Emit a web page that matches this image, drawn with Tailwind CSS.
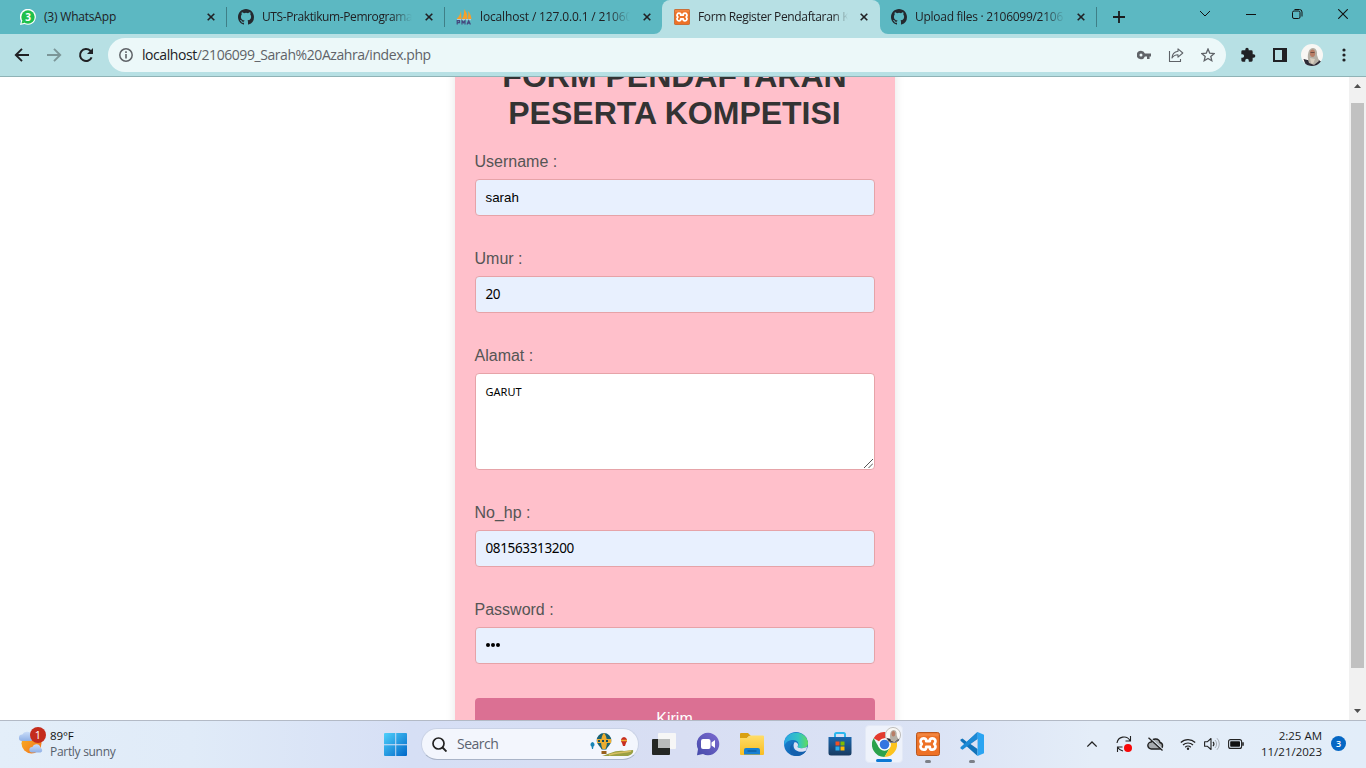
<!DOCTYPE html>
<html lang="id">
<head>
<meta charset="utf-8">
<title>Form Register Pendaftaran Kompetisi</title>
<script src="https://cdn.jsdelivr.net/npm/@tailwindcss/browser@4"></script>
</head>
<body class="w-[1366px] h-[768px] overflow-hidden flex flex-col bg-white font-['Open_Sans','Noto_Sans',sans-serif] text-[12px] text-[#202124]">
<svg class="hidden">
  <symbol id="gh" viewBox="0 0 16 16"><path fill="#24292f" d="M8 0C3.58 0 0 3.58 0 8c0 3.54 2.29 6.53 5.47 7.59.4.07.55-.17.55-.38 0-.19-.01-.82-.01-1.49-2.01.37-2.53-.49-2.69-.94-.09-.23-.48-.94-.82-1.13-.28-.15-.68-.52-.01-.53.63-.01 1.08.58 1.23.82.72 1.21 1.87.87 2.33.66.07-.52.28-.87.51-1.07-1.78-.2-3.64-.89-3.64-3.95 0-.87.31-1.59.82-2.15-.08-.2-.36-1.02.08-2.12 0 0 .67-.21 2.2.82a7.6 7.6 0 0 1 4 0c1.53-1.04 2.2-.82 2.2-.82.44 1.1.16 1.92.08 2.12.51.56.82 1.27.82 2.15 0 3.07-1.87 3.75-3.65 3.95.29.25.54.73.54 1.48 0 1.07-.01 1.93-.01 2.2 0 .21.15.46.55.38A8.01 8.01 0 0 0 16 8c0-4.42-3.58-8-8-8z"/></symbol>
  <symbol id="xampp" viewBox="0 0 24 24"><rect x=".5" y=".5" width="23" height="23" rx="2" fill="#ee7126" stroke="#b9571f"/><path d="M1.500 1.500h21v3c-8-1-15-1-21 .5z" fill="#f59a58" opacity=".5"/><path d="M7.500 6.300a3 3 0 0 0-2.700 4.300L5.800 12l-1 1.400a3 3 0 0 0 2.700 4.300c1.700 0 2.700-.9 2.700-2.300v-.6h3.600v.6c0 1.400 1 2.300 2.700 2.300a3 3 0 0 0 2.700-4.300L18.200 12l1-1.400a3 3 0 0 0-2.700-4.300c-1.700 0-2.700.9-2.700 2.300v.6h-3.600v-.6c0-1.400-1-2.300-2.700-2.300z" fill="none" stroke="#fff" stroke-width="2.700" stroke-linejoin="round"/></symbol>
  <symbol id="x" viewBox="0 0 8 8"><path d="M.7.7l6.600 6.600M7.300.7L.7 7.300" stroke="#202124" stroke-width="1.600"/></symbol>
</svg>

<!-- Tab strip -->
<div class="h-[34px] shrink-0 bg-[#5cb8c2] flex items-stretch pl-[8px]">
  <div class="w-[218px] flex items-center pl-[12px] pr-[10px]">
    <div class="w-4 h-4 shrink-0 relative"><svg class="w-4 h-4" viewBox="0 0 16 16"><path d="M0 16l1.100-4A8 8 0 1 1 4.500 15z" fill="#fff"/><circle cx="8" cy="8" r="6.700" fill="#1fc04b"/><path d="M1.500 14.500l.8-3 2.500 2.300z" fill="#1fc04b"/></svg><span class="absolute inset-0 text-center text-[10px] leading-[16px] font-bold text-white">3</span></div>
    <span class="ml-2 w-[150px] whitespace-nowrap overflow-hidden leading-4 tracking-[-0.2px]">(3) WhatsApp</span>
    <svg class="w-2 h-2 ml-[13px] shrink-0"><use href="#x"/></svg>
    <div class="w-px h-5 bg-[#3f7f87] ml-auto -mr-[11px] shrink-0"></div>
  </div>
  <div class="w-[218px] flex items-center pl-[12px] pr-[10px]">
    <svg class="w-4 h-4 shrink-0"><use href="#gh"/></svg>
    <span class="ml-2 w-[150px] whitespace-nowrap overflow-hidden leading-4 tracking-[-0.4px] [mask-image:linear-gradient(90deg,#000_86%,transparent)]">UTS-Praktikum-Pemrograma</span>
    <svg class="w-2 h-2 ml-[13px] shrink-0"><use href="#x"/></svg>
    <div class="w-px h-5 bg-[#3f7f87] ml-auto -mr-[11px] shrink-0"></div>
  </div>
  <div class="w-[218px] flex items-center pl-[12px] pr-[11px]">
    <svg class="w-4 h-4 shrink-0" viewBox="0 0 16 16"><path d="M.5 10C3 8 4.500 5 5 1.500L5.500 10zM6 10C8 7 8.500 3 8 0c3 3 4 7 3 10zM11.500 10c1-3 1-5.500.5-8 2 2 3 4.500 3.500 8z" fill="#f5a02c"/><path d="M1 10.700h14" stroke="#d9dce8" stroke-width=".8"/><path d="M1.200 15.500v-3.800h2.300v2H1.200M6 15.500v-3.800l1.500 2 1.500-2v3.800M11 15.500l1.700-3.800 1.700 3.800M11.500 14.200h2.500" stroke="#45487e" stroke-width="1.200" fill="none"/></svg>
    <span class="ml-2 w-[150px] whitespace-nowrap overflow-hidden leading-4 tracking-[-0.15px] [mask-image:linear-gradient(90deg,#000_86%,transparent)]">localhost / 127.0.0.1 / 21060</span>
    <svg class="w-2 h-2 ml-[13px] shrink-0"><use href="#x"/></svg>
  </div>
  <div class="w-[218px] flex items-center pl-[12px] pr-[11px] bg-[#b7e0e4] rounded-t-[8px] relative">
    <svg class="absolute -left-2 bottom-0 w-2 h-2" viewBox="0 0 8 8"><path d="M8 0v8H0a8 8 0 0 0 8-8z" fill="#b7e0e4"/></svg>
    <svg class="absolute -right-2 bottom-0 w-2 h-2" viewBox="0 0 8 8"><path d="M0 0v8h8a8 8 0 0 1-8-8z" fill="#b7e0e4"/></svg>
    <svg class="w-4 h-4 shrink-0"><use href="#xampp"/></svg>
    <span class="ml-2 w-[150px] whitespace-nowrap overflow-hidden leading-4 tracking-[-0.35px] [mask-image:linear-gradient(90deg,#000_90%,transparent)]">Form Register Pendaftaran K</span>
    <svg class="w-2 h-2 ml-[12px] shrink-0"><use href="#x"/></svg>
  </div>
  <div class="w-[217px] flex items-center pl-[11px] pr-[11px]">
    <svg class="w-4 h-4 shrink-0"><use href="#gh"/></svg>
    <span class="ml-2 w-[150px] whitespace-nowrap overflow-hidden leading-4 tracking-[-0.27px] [mask-image:linear-gradient(90deg,#000_86%,transparent)]">Upload files · 2106099/2106</span>
    <svg class="w-2 h-2 ml-[12px] shrink-0"><use href="#x"/></svg>
    <div class="w-px h-5 bg-[#3f7f87] ml-auto -mr-[11px] shrink-0"></div>
  </div>
  <svg class="w-3 h-3 ml-[16px] self-center" viewBox="0 0 12 12"><path d="M6 0v12M0 6h12" stroke="#1b1c1e" stroke-width="1.800"/></svg>
  <div class="ml-auto flex items-start pt-[9px] pr-[18px] gap-[36px]">
    <svg class="w-[10px] h-[10px]" viewBox="0 0 10 10"><path d="M0 2l5 5 5-5" fill="none" stroke="#111" stroke-width="1"/></svg>
    <svg class="w-[10px] h-[10px]" viewBox="0 0 10 10"><path d="M0 5.500h10" stroke="#111" stroke-width="1"/></svg>
    <svg class="w-[10px] h-[10px] overflow-visible" viewBox="0 0 10 10"><rect x=".5" y="2" width="7.500" height="7.500" rx="1.500" fill="none" stroke="#111"/><path d="M2.500.5h5A2.500 2.500 0 0 1 10 3v4.500" fill="none" stroke="#111"/></svg>
    <svg class="w-[10px] h-[10px]" viewBox="0 0 10 10"><path d="M.2.200l9.600 9.600M9.800.200L.2 9.800" stroke="#111" stroke-width="1.100"/></svg>
  </div>
</div>

<!-- Toolbar -->
<div class="h-[43px] shrink-0 bg-[#b7e0e4] border-b border-[#8fb3b6] flex items-center pl-[14px] pr-[14px]">
  <svg class="w-4 h-4" viewBox="0 0 16 16"><path d="M15 8H2M8 1.800L1.800 8 8 14.200" fill="none" stroke="#202124" stroke-width="1.900"/></svg>
  <svg class="w-4 h-4 ml-4" viewBox="0 0 16 16"><path d="M1 8h13M8 1.800L14.200 8 8 14.200" fill="none" stroke="#7b9698" stroke-width="1.900"/></svg>
  <svg class="w-4 h-4 ml-4" viewBox="0 0 16 16"><path d="M13.600 10.300A6 6 0 1 1 12.300 3.800L14 5.500" fill="none" stroke="#202124" stroke-width="2"/><path d="M15 1v6H9z" fill="#202124"/></svg>
  <div class="ml-[14px] w-[1118px] h-[34px] rounded-full bg-[#ecf8f9] flex items-center pl-[11px] pr-[11px]">
    <svg class="w-[14px] h-[14px]" viewBox="0 0 14 14"><circle cx="7" cy="7" r="6.200" fill="none" stroke="#5f6368" stroke-width="1.500"/><path d="M7 6v4.500M7 3.300v1.600" stroke="#5f6368" stroke-width="1.600"/></svg>
    <span class="ml-[9px] text-[14px] leading-5 text-[#5f6368] whitespace-nowrap tracking-[-0.43px]"><span class="text-[#202124]">localhost</span>/2106099_Sarah%20Azahra/index.php</span>
    <svg class="w-[14px] h-[10px] ml-auto" viewBox="0 0 14 10"><path fill-rule="evenodd" d="M4 .8a4.200 4.200 0 1 0 3.900 5.700H10V9h2.600V6.500H14v-3H7.900A4.200 4.200 0 0 0 4 .8zm0 2.700a1.500 1.500 0 1 1 0 3 1.500 1.500 0 0 1 0-3z" fill="#5f6368"/></svg>
    <svg class="w-4 h-4 ml-[17px]" viewBox="0 0 16 16"><path d="M1.500 4v10.500h11V12M10 1.800L14.800 6 10 10.200V7.700C7 7.700 5.300 8.700 4 11c.2-3.600 2.300-6.200 6-6.700z" fill="none" stroke="#5f6368" stroke-width="1.100" stroke-linejoin="round"/></svg>
    <svg class="w-[14px] h-[14px] ml-[17px]" viewBox="0 0 14 14"><path d="M7 1l1.700 4.100 4.500.4-3.400 2.900 1 4.300L7 10.400l-3.800 2.300 1-4.300L.8 5.500l4.500-.4z" fill="none" stroke="#5f6368" stroke-width="1.300"/></svg>
  </div>
  <svg class="w-4 h-4 ml-[14px]" viewBox="0 0 24 24"><path d="M20.500 11H19V7a2 2 0 0 0-2-2h-4V3.500a2.500 2.500 0 0 0-5 0V5H4a2 2 0 0 0-2 2v3.800h1.500a2.700 2.700 0 0 1 0 5.400H2V20a2 2 0 0 0 2 2h3.800v-1.500a2.700 2.700 0 0 1 5.400 0V22H17a2 2 0 0 0 2-2v-4h1.500a2.500 2.500 0 0 0 0-5z" fill="#202124"/></svg>
  <svg class="w-[14px] h-[14px] ml-[17px]" viewBox="0 0 14 14"><path d="M1 1h12v12H1z" fill="none" stroke="#202124" stroke-width="2"/><path d="M9 0h5v14H9z" fill="#202124"/></svg>
  <svg class="w-[22px] h-[22px] ml-[14px]" viewBox="0 0 22 22"><defs><clipPath id="av"><circle cx="11" cy="11" r="11"/></clipPath></defs><g clip-path="url(#av)"><path fill="#f8f7f4" d="M0 0h22v22H0z"/><path d="M2.500 15l6 1.500L13 20l4-4.500 3 2V22H5z" fill="#2c2b36"/><path d="M8 19C6.500 15 6.500 11 7.500 8c1-3 2.500-4 4.500-4 3.500 0 4.500 4 4 7l2 6-5 4z" fill="#b5b0a5"/><ellipse cx="11.500" cy="9.300" rx="2.600" ry="3.800" fill="#b87d65"/><path d="M9.500 8.500h4" stroke="#5b4038" stroke-width=".8"/><path d="M9 14l5 1-2 5-2-1z" fill="#d8cfc0"/></g></svg>
  <svg class="w-[4px] h-[14px] ml-[19px]" viewBox="0 0 4 14"><g fill="#202124"><circle cx="2" cy="2" r="1.600"/><circle cx="2" cy="7" r="1.600"/><circle cx="2" cy="12" r="1.600"/></g></svg>
</div>

<!-- Page -->
<div class="h-[643px] shrink-0 flex overflow-hidden bg-white">
  <div class="flex-1 overflow-hidden flex justify-center items-start font-['Liberation_Sans',Arial,sans-serif]">
    <div class="w-[440px] h-[760px] -mt-[39px] px-5 pt-5 bg-[#ffc0cb] shadow-[0_0_10px_rgba(0,0,0,0.1)] text-[16px] leading-[18px] text-[#555]">
      <h1 class="text-[32px] leading-[37px] font-bold text-center text-[#333] mb-[21px]">FORM PENDAFTARAN PESERTA KOMPETISI</h1>
      <div class="mb-[33px]"><label class="block mb-[8px]">Username :</label><div class="h-[37px] rounded-[4px] border border-[#e6a3a8] bg-[#e8f0fe] px-[10px] flex items-center text-[13.33px] text-black">sarah</div></div>
      <div class="mb-[33px] mt-[34px]"><label class="block mb-[8px]">Umur :</label><div class="h-[37px] rounded-[4px] border border-[#e6a3a8] bg-[#e8f0fe] px-[10px] pb-px flex items-center text-[13.5px] tracking-[-0.35px] text-black font-['Noto_Sans',sans-serif]">20</div></div>
      <div class="mb-[33px] mt-[34px]"><label class="block mb-[8px]">Alamat :</label><div class="h-[97px] rounded-[4px] border border-[#e6a3a8] bg-white px-[10px] pt-[9px] relative text-[11px] text-black font-['Noto_Sans',sans-serif]">GARUT<svg class="absolute right-px bottom-px w-[9px] h-[9px]" viewBox="0 0 9 9"><path d="M0 9l9-9M4.500 9L9 4.500" stroke="#555" stroke-width="1"/></svg></div></div>
      <div class="mb-[33px] mt-[34px]"><label class="block mb-[8px]">No_hp :</label><div class="h-[37px] rounded-[4px] border border-[#e6a3a8] bg-[#e8f0fe] px-[10px] pb-px flex items-center text-[13.5px] tracking-[-0.35px] text-black font-['Noto_Sans',sans-serif]">081563313200</div></div>
      <div class="mb-[34px] mt-[34px]"><label class="block mb-[8px]">Password :</label><div class="h-[37px] rounded-[4px] border border-[#e6a3a8] bg-[#e8f0fe] px-[10px] pb-px flex items-center gap-px"><i class="w-1 h-1 rounded-full bg-black"></i><i class="w-1 h-1 rounded-full bg-black"></i><i class="w-1 h-1 rounded-full bg-black"></i></div></div>
      <div class="h-[40px] rounded-[4px] bg-[#db7093] text-white text-center leading-[41px] text-[16px]">Kirim</div>
    </div>
  </div>
  <div class="w-[17px] bg-[#f1f1f1] flex flex-col items-center justify-between py-[7px]">
    <svg class="w-[7px] h-[4px]" viewBox="0 0 7 4"><path d="M0 4l3.500-4L7 4z" fill="#505050"/></svg>
    <div class="w-[13px] h-[565px] bg-[#c1c1c1] mt-[15px] mb-auto"></div>
    <svg class="w-[7px] h-[4px]" viewBox="0 0 7 4"><path d="M0 0l3.500 4L7 0z" fill="#505050"/></svg>
  </div>
</div>

<!-- Taskbar -->
<div class="h-[48px] shrink-0 border-t border-[#b3bac6] bg-[linear-gradient(90deg,#e3eef9_0%,#e0ebf8_14%,#d6dff5_30%,#d8def3_50%,#dbe3f5_68%,#e4edf8_80%,#e2edf9_100%)] flex items-center">
  <div class="w-[384px] flex items-center pl-[18px]">
    <div class="relative w-7 h-[28px] shrink-0 -mt-[5px]">
      <svg class="w-7 h-7" viewBox="0 0 28 28"><defs><linearGradient id="sun" x1="0" y1="0" x2="1" y2="1"><stop offset="0" stop-color="#fbb424"/><stop offset="1" stop-color="#f0701c"/></linearGradient><linearGradient id="cl" x1="0" y1="0" x2="0" y2="1"><stop offset="0" stop-color="#c9dcf8"/><stop offset="1" stop-color="#8fb0e6"/></linearGradient></defs><circle cx="13.500" cy="15.500" r="10" fill="url(#sun)"/><path d="M4 13a3.200 3.200 0 0 1 .3-6.400 5 5 0 0 1 9.500 1.900A2.500 2.500 0 0 1 13 13z" fill="url(#cl)"/><path d="M14 24.500a2.800 2.800 0 0 1 .3-5.600 4.300 4.300 0 0 1 8.200 1A2.400 2.400 0 0 1 22.500 24.500z" fill="url(#cl)"/></svg>
      <span class="absolute left-[12px] -top-px w-4 h-4 rounded-full bg-[#c42b1c] text-white text-[11px] leading-4 text-center">1</span>
    </div>
    <div class="ml-[4px] leading-4 -mt-px"><div class="text-[#111] text-[11.5px] tracking-[-0.1px]">89°F</div><div class="text-[#56606b] text-[12px] tracking-[-0.3px]">Partly sunny</div></div>
  </div>
  <svg class="w-6 h-6 shrink-0" viewBox="0 0 24 24"><defs><linearGradient id="win" x1="0" y1="0" x2="1" y2="1"><stop offset="0" stop-color="#4fd0fb"/><stop offset="1" stop-color="#0067c8"/></linearGradient></defs><path d="M0 1a1 1 0 0 1 1-1h10.300v11.300H0zM12.200 0H22a1 1 0 0 1 1 1v10.300H12.200zM0 12.200h11.300V23H1a1 1 0 0 1-1-1zM12.200 12.200H23V22a1 1 0 0 1-1 1H12.200z" fill="url(#win)"/></svg>
  <div class="ml-[13px] -mt-px w-[218px] h-[32px] shrink-0 rounded-full bg-[#f3f6fd] border border-[#c9d2e6] border-b-[#a9b4c8] flex items-center pl-[10px] pr-[4px]">
    <svg class="w-[15px] h-[15px]" viewBox="0 0 15 15"><circle cx="6.500" cy="6.500" r="5.500" fill="none" stroke="#222" stroke-width="1.700"/><path d="M10.500 10.500l4 4" stroke="#222" stroke-width="1.900"/></svg>
    <span class="ml-[10px] text-[14px] leading-5 text-[#5c6370] tracking-[-0.5px]">Search</span>
    <svg class="ml-auto w-[45px] h-[25px]" viewBox="0 0 45 25"><path d="M13 24c8-2 12-6 22-5l9-1c1 3-2 5-5 6z" fill="#9aa044"/><path d="M20 23c8-3 14-2 22-4" stroke="#d8bf63" stroke-width="1.500" fill="none"/><path d="M15 1a7.300 7.300 0 0 1 7.300 7.500c0 4-4 6-5 9h-4.600c-1-3-5-5-5-9A7.300 7.300 0 0 1 15 1z" fill="#1b6273"/><path d="M15 1c3 3 4 11 1.500 16h-3C11 12 12 4 15 1z" fill="#edae31"/><path d="M8 7h14.200v4H8z" fill="#edae31"/><path d="M9 9h12" stroke="#174e60" stroke-width="1.800" stroke-dasharray="2 2"/><path d="M12.500 19h5v3h-5z" fill="#98601d"/><path d="M3.500 10a2.500 2.500 0 0 1 1 4.500L4 17H3l-.5-2.500A2.500 2.500 0 0 1 3.500 10z" fill="#1884b5"/><path d="M35 5a3.500 3.500 0 0 1 2 6l-1 3h-2l-1-3a3.500 3.500 0 0 1 2-6z" fill="#c72e22"/><path d="M32 8.500h6" stroke="#edae31" stroke-width="1.500"/></svg>
  </div>
  <div class="flex items-center ml-[3px] -mt-px shrink-0">
    <div class="w-11 flex justify-center"><svg class="w-6 h-6" viewBox="0 0 24 24"><rect x="6" y="1" width="18" height="16" rx="1" fill="#f6f6f6"/><rect y="7" width="18" height="16" rx="1" fill="#252725"/><path d="M6 7h12v9H6z" fill="#b9bbbb"/></svg></div>
    <div class="w-11 flex justify-center"><svg class="w-6 h-6" viewBox="0 0 24 24"><defs><linearGradient id="chat" x1="0" y1="1" x2="1" y2="0"><stop offset="0" stop-color="#444aaa"/><stop offset="1" stop-color="#7d6bd0"/></linearGradient></defs><path d="M12 .8A11.200 11.200 0 1 1 7 22l-6 1.200L2 17A11.200 11.200 0 0 1 12 .8z" fill="url(#chat)"/><rect x="5" y="7" width="9.500" height="10" rx="2" fill="#fff"/><path d="M15.500 10.500L19 8v8l-3.500-2.500z" fill="#fff"/></svg></div>
    <div class="w-11 flex justify-center"><svg class="w-6 h-6" viewBox="0 0 24 24"><defs><linearGradient id="fol" x1="0" y1="0" x2="0" y2="1"><stop offset="0" stop-color="#ffdd69"/><stop offset="1" stop-color="#f9bd22"/></linearGradient></defs><path d="M0 2a1 1 0 0 1 1-1h7l3 3h-2L7 6H0z" fill="#d9a010"/><path d="M0 6h7l3-2.500h13a1 1 0 0 1 1 1V22a1 1 0 0 1-1 1H1a1 1 0 0 1-1-1z" fill="url(#fol)"/><path d="M4 22.500V18a2 2 0 0 1 2-2h12a2 2 0 0 1 2 2v4.500z" fill="#1780d2"/><path d="M7.500 19h9" stroke="#0c5998" stroke-width="1.200"/></svg></div>
    <div class="w-11 flex justify-center"><svg class="w-6 h-6" viewBox="0 0 24 24"><defs><linearGradient id="e1" x1="0" y1=".3" x2="1" y2=".3"><stop offset="0" stop-color="#2aa5e5"/><stop offset=".6" stop-color="#32c5c2"/><stop offset="1" stop-color="#62dc5c"/></linearGradient><linearGradient id="e2" x1="0" y1="0" x2="1" y2="1"><stop offset="0" stop-color="#1c8bd9"/><stop offset="1" stop-color="#0c4f9f"/></linearGradient></defs><circle cx="12" cy="12" r="12" fill="url(#e2)"/><path d="M.3 10C2-2 22-3 24 10.500c.3 4-3 5.800-6 5.800-3.300 0-4.800-1-4.300-2 1.800-2.300.5-6-4-6.300C5 7.700 1.500 10 .3 14z" fill="url(#e1)"/><path d="M9.700 11c-3 4 0 9.500 5.300 9.500 3 0 5.500-.8 7.500-2.300-2 3.600-5.500 5.800-10.500 5.800C5.500 23.500 3.500 14 9.700 11z" fill="#1460ad"/><path d="M10.500 10.300c3 0 4.200 2.200 3.200 4-.8 1.200 1.500 2 4.300 2 2 0 3.800-.5 5-1.700L22.500 18.200c-5 3-11.500 1.300-12.700-3-.5-2 0-3.800.7-4.900z" fill="#d9e0f4"/></svg></div>
    <div class="w-11 flex justify-center"><svg class="w-6 h-6" viewBox="0 0 24 24"><defs><linearGradient id="st" x1="0" y1="0" x2="0" y2="1"><stop offset="0" stop-color="#1b67ae"/><stop offset="1" stop-color="#183a60"/></linearGradient></defs><path d="M7 5V2.500A1.500 1.500 0 0 1 8.500 1h7A1.500 1.500 0 0 1 17 2.500V5" fill="none" stroke="#2bb7ee" stroke-width="2"/><path d="M.5 5h23v16a2.500 2.500 0 0 1-2.500 2.500H3A2.500 2.500 0 0 1 .5 21z" fill="url(#st)"/><path d="M7.500 9.500h4v4h-4z" fill="#f25022"/><path d="M12.500 9.500h4v4h-4z" fill="#7fba00"/><path d="M7.500 14.500h4v4h-4z" fill="#29aef0"/><path d="M12.500 14.500h4v4h-4z" fill="#ffb900"/></svg></div>
    <div class="w-11 flex justify-center"><div class="w-[38px] h-[38px] rounded-[4px] bg-[#eef2fb] border border-[#e3e9f6] relative">
      <svg class="absolute left-[6px] top-[6px] w-[25px] h-[25px]" viewBox="0 0 24 24"><path d="M12 12L1.600 6A12 12 0 0 1 22.400 6H12z" fill="#e33b2e"/><path d="M12 12l5.200 3L12 24A12 12 0 0 1 1.600 6l5.200 9z" fill="#2ba24c"/><path d="M12 6h10.400A12 12 0 0 1 12 24l5.200-9A6 6 0 0 0 12 6z" fill="#fcc31e"/><circle cx="12" cy="12" r="6" fill="#fff"/><circle cx="12" cy="12" r="4.600" fill="#3475e0"/></svg>
      <svg class="absolute left-[19px] top-[1px] w-4 h-4" viewBox="0 0 22 22"><g clip-path="url(#av)"><path fill="#f8f7f4" d="M0 0h22v22H0z"/><path d="M2.500 15l6 1.500L13 20l4-4.500 3 2V22H5z" fill="#2c2b36"/><path d="M8 19C6.500 15 6.500 11 7.500 8c1-3 2.500-4 4.500-4 3.500 0 4.500 4 4 7l2 6-5 4z" fill="#b5b0a5"/><ellipse cx="11.500" cy="9.300" rx="2.600" ry="3.800" fill="#b87d65"/></g><circle cx="11" cy="11" r="10.400" fill="none" stroke="#aaa" stroke-width="1"/></svg>
      <div class="absolute left-[10px] bottom-0 w-4 h-[3px] rounded-full bg-[#0b78d4]"></div>
    </div></div>
    <div class="w-11 flex justify-center relative"><svg class="w-6 h-6"><use href="#xampp"/></svg><div class="absolute left-[19px] top-[28px] w-[6px] h-[3px] rounded-full bg-[#7c8088]"></div></div>
    <div class="w-11 flex justify-center relative"><svg class="w-6 h-6" viewBox="0 0 24 24"><path d="M17.500 0L6.900 10 2.500 6.500.5 7.500v1.300L17.500 24z" fill="#1173ba"/><path d="M17.500 0v6.600L2.500 17.700l-2-1.200v-1.300z" fill="#1c8ad6"/><path d="M17.500 0L24 2.800v18.400L17.500 24z" fill="#2aa4f2"/><path d="M17.500 7v10L10.500 12z" fill="#dae1f4"/></svg><div class="absolute left-[19px] top-[28px] w-[6px] h-[3px] rounded-full bg-[#7c8088]"></div></div>
  </div>
  <div class="ml-auto -mt-[2px] flex items-center pr-[20px] shrink-0">
    <svg class="w-[10px] h-[6px]" viewBox="0 0 10 6"><path d="M.3 5.500L5 1l4.700 4.500" fill="none" stroke="#222" stroke-width="1.300"/></svg>
    <svg class="w-4 h-4 ml-[19px]" viewBox="0 0 16 16"><path d="M1 7A7 7 0 0 1 14 4.500M14.500 0v5h-5M1.500 16v-5h5M1.800 11.500A7 7 0 0 0 7 15" fill="none" stroke="#222" stroke-width="1.100"/><circle cx="12" cy="12" r="4" fill="#f80808"/></svg>
    <svg class="w-[17px] h-[14px] ml-[15px]" viewBox="0 0 17 14"><path d="M4.500 12a3.500 3.500 0 0 1-.3-7A4.600 4.600 0 0 1 13 5.500a3.300 3.300 0 0 1-.5 6.500z" fill="#a6aaae" stroke="#222" stroke-width="1.400"/><path d="M2.800.8l12.700 11.500" stroke="#e3edf8" stroke-width="1.500"/><path d="M1.500.8l14 12.700" stroke="#222" stroke-width="1.300"/></svg>
    <svg class="w-4 h-3 ml-[16px]" viewBox="0 0 16 12"><path d="M.8 4.500a10.300 10.300 0 0 1 14.400 0M3 7a7.200 7.200 0 0 1 10 0M5.200 9.200a4 4 0 0 1 5.600 0" fill="none" stroke="#222" stroke-width="1.200"/><circle cx="8" cy="10.800" r="1.200" fill="#222"/></svg>
    <svg class="w-4 h-[14px] ml-[8px]" viewBox="0 0 16 14"><path d="M.6 4.800h2.600L7 1.500v11L3.200 9.200H.6z" fill="none" stroke="#222" stroke-width="1.100" stroke-linejoin="round"/><path d="M9 4.800a3.300 3.300 0 0 1 0 4.400" fill="none" stroke="#222" stroke-width="1.100"/><path d="M11 3a5.800 5.800 0 0 1 0 8M13 1.200a8.500 8.500 0 0 1 0 11.600" fill="none" stroke="#a8aeb6" stroke-width="1"/></svg>
    <svg class="w-4 h-[10px] ml-[8px]" viewBox="0 0 16 10"><rect x=".6" y=".6" width="13" height="8.800" rx="2" fill="none" stroke="#222" stroke-width="1.100"/><rect x="2.200" y="2.200" width="9.800" height="5.600" rx=".8" fill="#111"/><path d="M15 3.200v3.600" stroke="#222" stroke-width="1.600"/></svg>
    <div class="w-[78px] text-right leading-4 text-[11.5px] text-[#1b1b1b] whitespace-nowrap"><div>2:25 AM</div><div>11/21/2023</div></div>
    <div class="ml-[9px] w-[15px] h-[15px] rounded-full bg-[#0567c4] text-white text-[9px] leading-[15px] text-center font-semibold">3</div>
  </div>
</div>
</body>
</html>
